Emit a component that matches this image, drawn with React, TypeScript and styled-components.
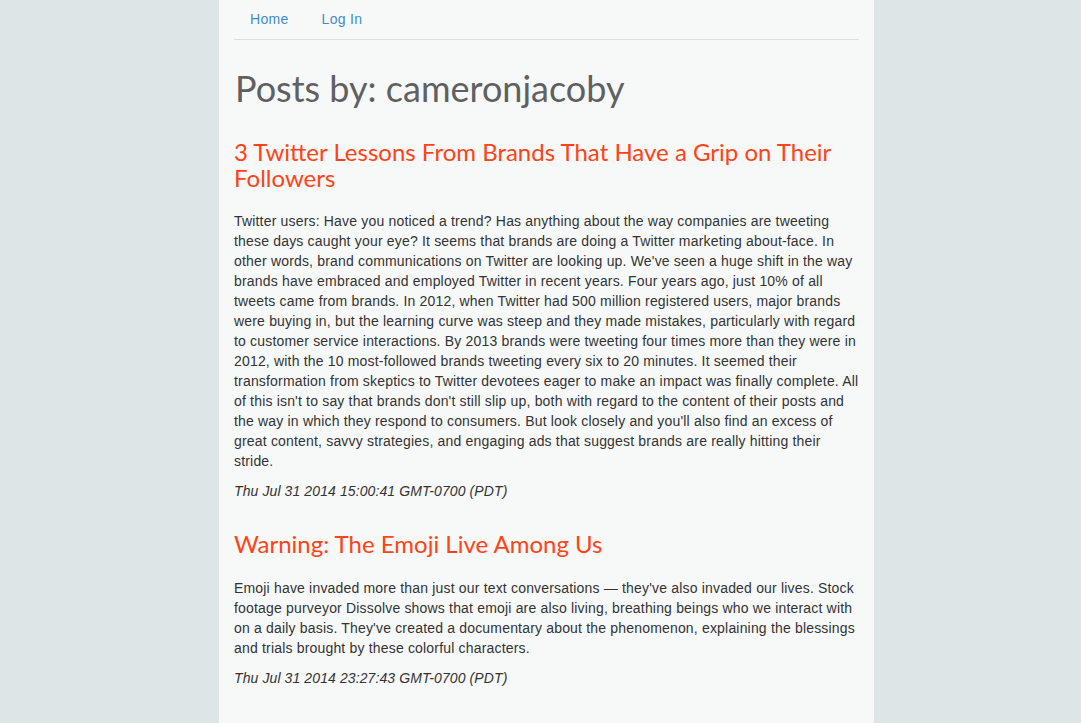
import React from "react"
import styled, {createGlobalStyle} from 'styled-components'

const GlobalStyle = createGlobalStyle`
  html, body {
    margin: 0;
    padding: 0;
    background: #dde5e6;
  }
  body {
    font-family: "Liberation Sans", Arial, Helvetica, sans-serif;
    font-size: 14px;
    line-height: 20px;
    color: #333;
  }
`;

const Page = styled.div`
  width: 655px;
  min-height: 723px;
  margin: 0 auto;
  padding: 0 15px 20px;
  box-sizing: border-box;
  background: #f7f9f9;
  position: relative;
  left: 6px;
`;

const NavBar = styled.ul`
  list-style: none;
  margin: 0;
  padding: 0;
  display: flex;
  gap: 2px;
  height: 39px;
  border-bottom: 1px solid #dcdedf;
`;

const NavLink = styled.a`
  display: block;
  padding: 9px 15px 10px 16px;
  line-height: 20px;
  color: #428bca;
  text-decoration: none;
  letter-spacing: 0.3px;
  cursor: pointer;
`;

const PageTitle = styled.h1`
  font-family: Lato, "Open Sans", sans-serif;
  font-weight: 400;
  font-size: 36px;
  line-height: 39.6px;
  color: #5f6061;
  margin: 29px 0 0 1px;
`;

const Post = styled.article<{first?: boolean}>`
  margin-top: ${p => p.first ? "30px" : "30px"};
`;

const PostTitle = styled.h3`
  font-family: Lato, "Open Sans", sans-serif;
  font-weight: 400;
  font-size: 24px;
  line-height: 26.4px;
  color: #ff4316;
  margin: 0 0 20px;
`;

const PostBody = styled.p`
  margin: 0 0 10px;
  letter-spacing: 0.18px;
`;

const PostDate = styled.p`
  margin: 0;
  font-style: italic;
  letter-spacing: 0.1px;
`;

interface PostData {
    title: string,
    body: string,
    date: string
}

const posts: Array<PostData> = [
    {
        title: "3 Twitter Lessons From Brands That Have a Grip on Their Followers",
        body: "Twitter users: Have you noticed a trend? Has anything about the way companies are tweeting these days caught your eye? It seems that brands are doing a Twitter marketing about-face. In other words, brand communications on Twitter are looking up. We've seen a huge shift in the way brands have embraced and employed Twitter in recent years. Four years ago, just 10% of all tweets came from brands. In 2012, when Twitter had 500 million registered users, major brands were buying in, but the learning curve was steep and they made mistakes, particularly with regard to customer service interactions. By 2013 brands were tweeting four times more than they were in 2012, with the 10 most-followed brands tweeting every six to 20 minutes. It seemed their transformation from skeptics to Twitter devotees eager to make an impact was finally complete. All of this isn't to say that brands don't still slip up, both with regard to the content of their posts and the way in which they respond to consumers. But look closely and you'll also find an excess of great content, savvy strategies, and engaging ads that suggest brands are really hitting their stride.",
        date: "Thu Jul 31 2014 15:00:41 GMT-0700 (PDT)"
    },
    {
        title: "Warning: The Emoji Live Among Us",
        body: "Emoji have invaded more than just our text conversations \u2014 they've also invaded our lives. Stock footage purveyor Dissolve shows that emoji are also living, breathing beings who we interact with on a daily basis. They've created a documentary about the phenomenon, explaining the blessings and trials brought by these colorful characters.",
        date: "Thu Jul 31 2014 23:27:43 GMT-0700 (PDT)"
    }
];

const App = () => {
    return (
        <>
            <GlobalStyle/>
            <Page>
                <NavBar>
                    <li><NavLink>Home</NavLink></li>
                    <li><NavLink>Log In</NavLink></li>
                </NavBar>
                <PageTitle>Posts by: cameronjacoby</PageTitle>
                {posts.map((post, index) => (
                    <Post key={`post-${index}`} first={index === 0}>
                        <PostTitle>{post.title}</PostTitle>
                        <PostBody>{post.body}</PostBody>
                        <PostDate>{post.date}</PostDate>
                    </Post>
                ))}
            </Page>
        </>
    )
};

export default App
